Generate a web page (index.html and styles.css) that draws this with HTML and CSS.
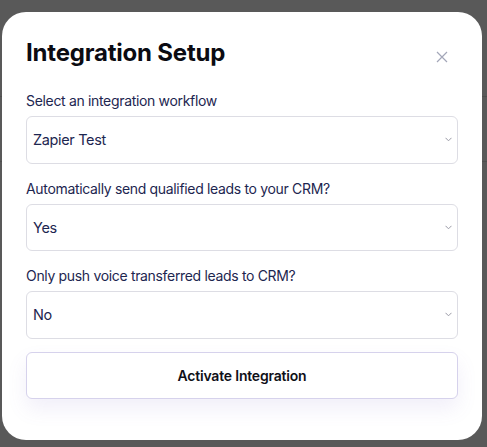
FILE: index.html
```html
<!DOCTYPE html>
<html>
<head>
<meta charset="utf-8">
<link rel="stylesheet" href="styles.css">
</head>
<body>
<div class="backdrop">
  <div class="band band-top"></div>
  <div class="band band-mid"></div>
</div>
<div class="modal">
  <div class="header">
    <h1 class="title">Integration Setup</h1>
    <button class="close" aria-label="Close">
      <svg width="12" height="12" viewBox="0 0 12 12"><path d="M1 1L11 11M11 1L1 11" stroke="#a3a6b8" stroke-width="1.2" fill="none"/></svg>
    </button>
  </div>
  <div class="field">
    <label class="label">Select an integration workflow</label>
    <div class="select"><span>Zapier Test</span><svg class="chev" width="7" height="5" viewBox="0 0 7 5"><path d="M0.5 0.8L3.5 3.8L6.5 0.8" stroke="#9a9aa6" stroke-width="1" fill="none"/></svg></div>
  </div>
  <div class="field">
    <label class="label">Automatically send qualified leads to your CRM?</label>
    <div class="select"><span>Yes</span><svg class="chev" width="7" height="5" viewBox="0 0 7 5"><path d="M0.5 0.8L3.5 3.8L6.5 0.8" stroke="#9a9aa6" stroke-width="1" fill="none"/></svg></div>
  </div>
  <div class="field">
    <label class="label">Only push voice transferred leads to CRM?</label>
    <div class="select"><span>No</span><svg class="chev" width="7" height="5" viewBox="0 0 7 5"><path d="M0.5 0.8L3.5 3.8L6.5 0.8" stroke="#9a9aa6" stroke-width="1" fill="none"/></svg></div>
  </div>
  <button class="activate">Activate Integration</button>
</div>
</body>
</html>
```

FILE: styles.css
```css
* { box-sizing: border-box; }
html, body { margin: 0; padding: 0; }
body {
  width: 487px;
  height: 447px;
  background: #595959;
  font-family: Inter, "Noto Sans", sans-serif;
  position: relative;
  overflow: hidden;
}
.backdrop { position: absolute; inset: 0; }
.band { position: absolute; left: 0; right: 0; height: 1px; background: #4e4e4e; }
.band-top { top: 96px; }
.band-mid { top: 161px; }
.modal {
  position: absolute;
  left: 2px;
  top: 12px;
  width: 480px;
  height: 428px;
  background: #fff;
  border-radius: 24px;
  padding: 26px 24px 24px 24px;
  display: flex;
  flex-direction: column;
}
.header {
  display: flex;
  align-items: center;
  justify-content: space-between;
  margin-bottom: 24px;
}
.title {
  margin: 0;
  font-size: 24px;
  line-height: 30px;
  font-weight: 700;
  color: #0b0b12;
  letter-spacing: -0.2px;
}
.close {
  border: 0;
  background: none;
  padding: 0;
  margin-right: 10px;
  margin-top: 8px;
  width: 12px;
  height: 12px;
  display: flex;
}
.field { display: flex; flex-direction: column; }
.field + .field { margin-top: 16px; }
.label {
  font-size: 14px;
  line-height: 18px;
  color: #1d2650;
  margin-bottom: 6px;
  letter-spacing: -0.33px;
}
.select {
  height: 47.5px;
  border: 1px solid #dddde4;
  border-radius: 6px;
  display: flex;
  align-items: center;
  justify-content: space-between;
  padding: 0 5px 0 6px;
  font-size: 14.5px;
  letter-spacing: -0.35px;
  color: #1d2650;
}
.activate {
  margin-top: 13px;
  height: 47px;
  border: 1px solid #d6d2ec;
  border-radius: 6px;
  background: #fff;
  font-family: Inter, "Noto Sans", sans-serif;
  font-size: 14px;
  font-weight: 600;
  letter-spacing: -0.2px;
  color: #101018;
  box-shadow: 0 10px 20px rgba(120, 100, 200, 0.10);
}
```
